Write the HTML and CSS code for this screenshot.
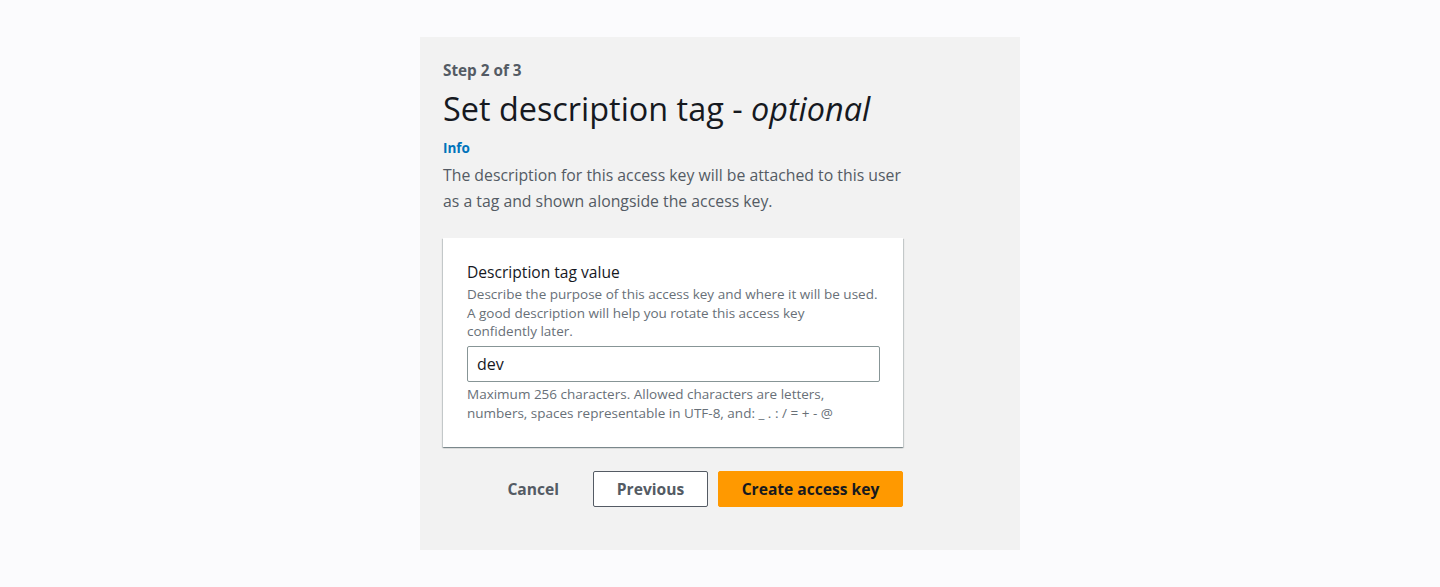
FILE: index.html
```html
<!DOCTYPE html>
<html lang="en">
<head>
<meta charset="utf-8">
<title>Set description tag</title>
<link rel="stylesheet" href="styles.css">
</head>
<body>
<main class="panel">
  <div class="step">Step 2 of 3</div>
  <h1 class="title">Set description tag - <em>optional</em></h1>
  <a class="info" href="#">Info</a>
  <p class="intro">The description for this access key will be attached to this user as a tag and shown alongside the access key.</p>
  <section class="card">
    <label class="label" for="desc">Description tag value</label>
    <p class="hint">Describe the purpose of this access key and where it will be used. A good description will help you rotate this access key<br>confidently later.</p>
    <input class="input" id="desc" type="text" value="dev">
    <p class="constraint">Maximum 256 characters. Allowed characters are letters, numbers, spaces representable in UTF-8, and: _ . : / = + - @</p>
  </section>
  <div class="actions">
    <button class="btn btn-link" type="button">Cancel</button>
    <button class="btn btn-normal" type="button">Previous</button>
    <button class="btn btn-primary" type="button">Create access key</button>
  </div>
</main>
</body>
</html>
```

FILE: styles.css
```css
html, body {
  margin: 0;
  padding: 0;
}
body {
  background: #fbfbfd;
  font-family: "Open Sans", "Noto Sans", sans-serif;
  color: #16191f;
  height: 587px;
  padding-top: 37px;
  box-sizing: border-box;
}
.panel {
  width: 600px;
  height: 513px;
  margin: 0 auto;
  background: #f2f2f2;
  box-sizing: border-box;
  padding: 23px 117px 0 23px;
  display: flex;
  flex-direction: column;
}
.step {
  font-size: 15.3px;
  font-weight: 700;
  color: #545b64;
  line-height: 20px;
}
.title {
  margin: 8px 0 0;
  font-size: 32.4px;
  font-weight: 400;
  line-height: 40px;
  color: #16191f;
}
.title em {
  font-style: italic;
}
.info {
  margin-top: 11px;
  font-size: 13.5px;
  font-weight: 700;
  color: #0073bb;
  text-decoration: none;
  line-height: 18px;
  align-self: flex-start;
}
.intro {
  margin: 5px 0 0;
  font-size: 15.8px;
  line-height: 26px;
  color: #545b64;
}
.card {
  margin-top: 24px;
  background: #fff;
  box-shadow: 0 1px 1px 0 rgba(0, 28, 36, 0.3), 1px 1px 1px 0 rgba(0, 28, 36, 0.15), -1px 1px 1px 0 rgba(0, 28, 36, 0.15);
  padding: 23px 23px 0 24px;
  display: flex;
  flex-direction: column;
  height: 209px;
  box-sizing: border-box;
}
.label {
  font-size: 15.6px;
  line-height: 22px;
  color: #16191f;
}
.hint, .constraint {
  margin: 2px 0 0;
  font-size: 13.5px;
  line-height: 18.5px;
  color: #687078;
}
.input {
  margin-top: 5.5px;
  height: 36px;
  box-sizing: border-box;
  border: 1px solid #879596;
  border-radius: 2px;
  padding: 0 9px;
  font-family: inherit;
  font-size: 16px;
  color: #16191f;
  background: #fff;
}
.constraint {
  margin-top: 3px;
}
.actions {
  margin-top: 24px;
  display: flex;
  justify-content: flex-end;
  gap: 10px;
}
.btn {
  height: 36px;
  box-sizing: border-box;
  font-family: inherit;
  font-size: 15.6px;
  font-weight: 700;
  border-radius: 2px;
  padding: 0 20px;
  cursor: pointer;
}
.btn-link {
  background: transparent;
  border: 1px solid transparent;
  color: #545b64;
  margin-right: 3px;
}
.btn-normal {
  background: #fff;
  border: 1px solid #545b64;
  color: #545b64;
  width: 115px;
}
.btn-primary {
  background: #ff9900;
  border: 1px solid #ff9900;
  color: #16191f;
  width: 185px;
}
```
